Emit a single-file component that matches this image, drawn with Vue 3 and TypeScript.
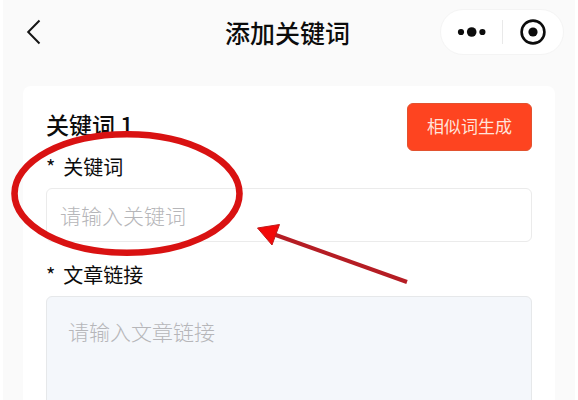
<script setup lang="ts">
import { ref } from 'vue'

const keyword = ref('')
const articleLink = ref('')
</script>

<template>
  <main class="page">
    <header class="navbar">
      <button class="icon-button back" type="button" aria-label="返回">
        <svg width="16" height="26" viewBox="0 0 16 26" fill="none" stroke="#151515" stroke-width="2">
          <path d="M13.500 1.5 2.2 13 13.500 24.5" />
        </svg>
      </button>
      <h1 class="title">添加关键词</h1>
      <div class="capsule">
        <button class="icon-button" type="button" aria-label="更多">
          <svg width="30" height="12" viewBox="0 0 30 12" fill="#0c0c0c">
            <circle cx="5" cy="6" r="3.1" />
            <circle cx="15.7" cy="6" r="4.8" />
            <circle cx="26.4" cy="6" r="3.1" />
          </svg>
        </button>
        <span class="divider"></span>
        <button class="icon-button" type="button" aria-label="关闭">
          <svg width="26" height="26" viewBox="0 0 26 26">
            <circle cx="13" cy="13" r="11.4" fill="none" stroke="#0c0c0c" stroke-width="2.6" />
            <circle cx="13" cy="13" r="4.6" fill="#0c0c0c" />
          </svg>
        </button>
      </div>
    </header>

    <form class="card" @submit.prevent>
      <div class="card-head">
        <h2 class="card-title">关键词 1</h2>
        <button class="generate" type="button">相似词生成</button>
      </div>
      <label class="label" for="keyword"><span>*</span>关键词</label>
      <input id="keyword" v-model="keyword" class="field" type="text" placeholder="请输入关键词" />
      <label class="label" for="link"><span>*</span>文章链接</label>
      <textarea id="link" v-model="articleLink" class="field area" placeholder="请输入文章链接"></textarea>

      <svg class="marks" width="400" height="160" viewBox="0 0 400 160" aria-hidden="true">
        <ellipse cx="119" cy="67.5" rx="112.5" ry="59.2" fill="none" stroke="#d91212" stroke-width="6.6" />
        <path d="M265 108 399 156" stroke="#b51d24" stroke-width="4" />
        <path d="M249.5 102 271.5 98.500 264 119Z" fill="#f30808" stroke="#c01a1a" stroke-width="1" />
      </svg>
    </form>
  </main>
</template>

<style>
body {
  background: #fff;
}
</style>

<style scoped>
.page {
  box-sizing: border-box;
  height: 100vh;
  margin: 0 3px;
  padding: 0 20px;
  overflow: hidden;
  background: #fafafa;
  color: #0c0c0c;
  font-family: "Noto Sans CJK SC", sans-serif;
}

.navbar {
  display: grid;
  grid-template-columns: 1fr auto 1fr;
  align-items: center;
  margin-right: -9px;
  padding: 9px 0 31px;
}

.icon-button {
  display: flex;
  align-items: center;
  justify-content: center;
  padding: 0;
  border: 0;
  background: none;
}

.back {
  justify-self: start;
  margin-left: 3px;
}

.title {
  margin: 0 12px 0 0;
  font-size: 25px;
  font-weight: 500;
  line-height: 36px;
}

.capsule {
  display: grid;
  grid-template-columns: 1fr 1px 1fr;
  align-items: center;
  justify-self: end;
  box-sizing: border-box;
  width: 124px;
  height: 46px;
  border: 1px solid #f4f4f4;
  border-radius: 23px;
  background: #fff;
}

.divider {
  height: 24px;
  background: #e9e9e9;
}

.card {
  position: relative;
  display: flex;
  flex-direction: column;
  padding: 17px 23px 24px;
  border-radius: 8px;
  background: #fff;
}

.card-head {
  display: flex;
  align-items: flex-start;
  justify-content: space-between;
}

.card-title {
  margin: 4px 0 0;
  font-size: 23px;
  font-weight: 500;
  line-height: 34px;
}

.generate {
  padding: 9px 19px 11px;
  border: 1px solid #e2522f;
  border-radius: 6px;
  background: #fe4420;
  color: #ffe3da;
  font: 400 17px/26px "Noto Sans CJK SC", sans-serif;
}

.label {
  display: flex;
  gap: 8px;
  margin-bottom: 5px;
  font-size: 20px;
  line-height: 32px;
}

.field {
  box-sizing: border-box;
  width: 100%;
  height: 54px;
  margin: 0 0 17px;
  padding: 0 13px;
  border: 1px solid #ebebeb;
  border-radius: 6px;
  outline: 0;
  background: #fff;
  color: #0c0c0c;
  font: 300 21px/30px "Noto Sans CJK SC", sans-serif;
}

.field::placeholder {
  color: #b6b6b9;
  opacity: 1;
}

.area {
  height: 160px;
  padding: 19px 21px;
  border-color: #e6e8ea;
  background: #f4f7fb;
  resize: none;
}

.marks {
  position: absolute;
  top: 40px;
  left: -15px;
  pointer-events: none;
}
</style>
